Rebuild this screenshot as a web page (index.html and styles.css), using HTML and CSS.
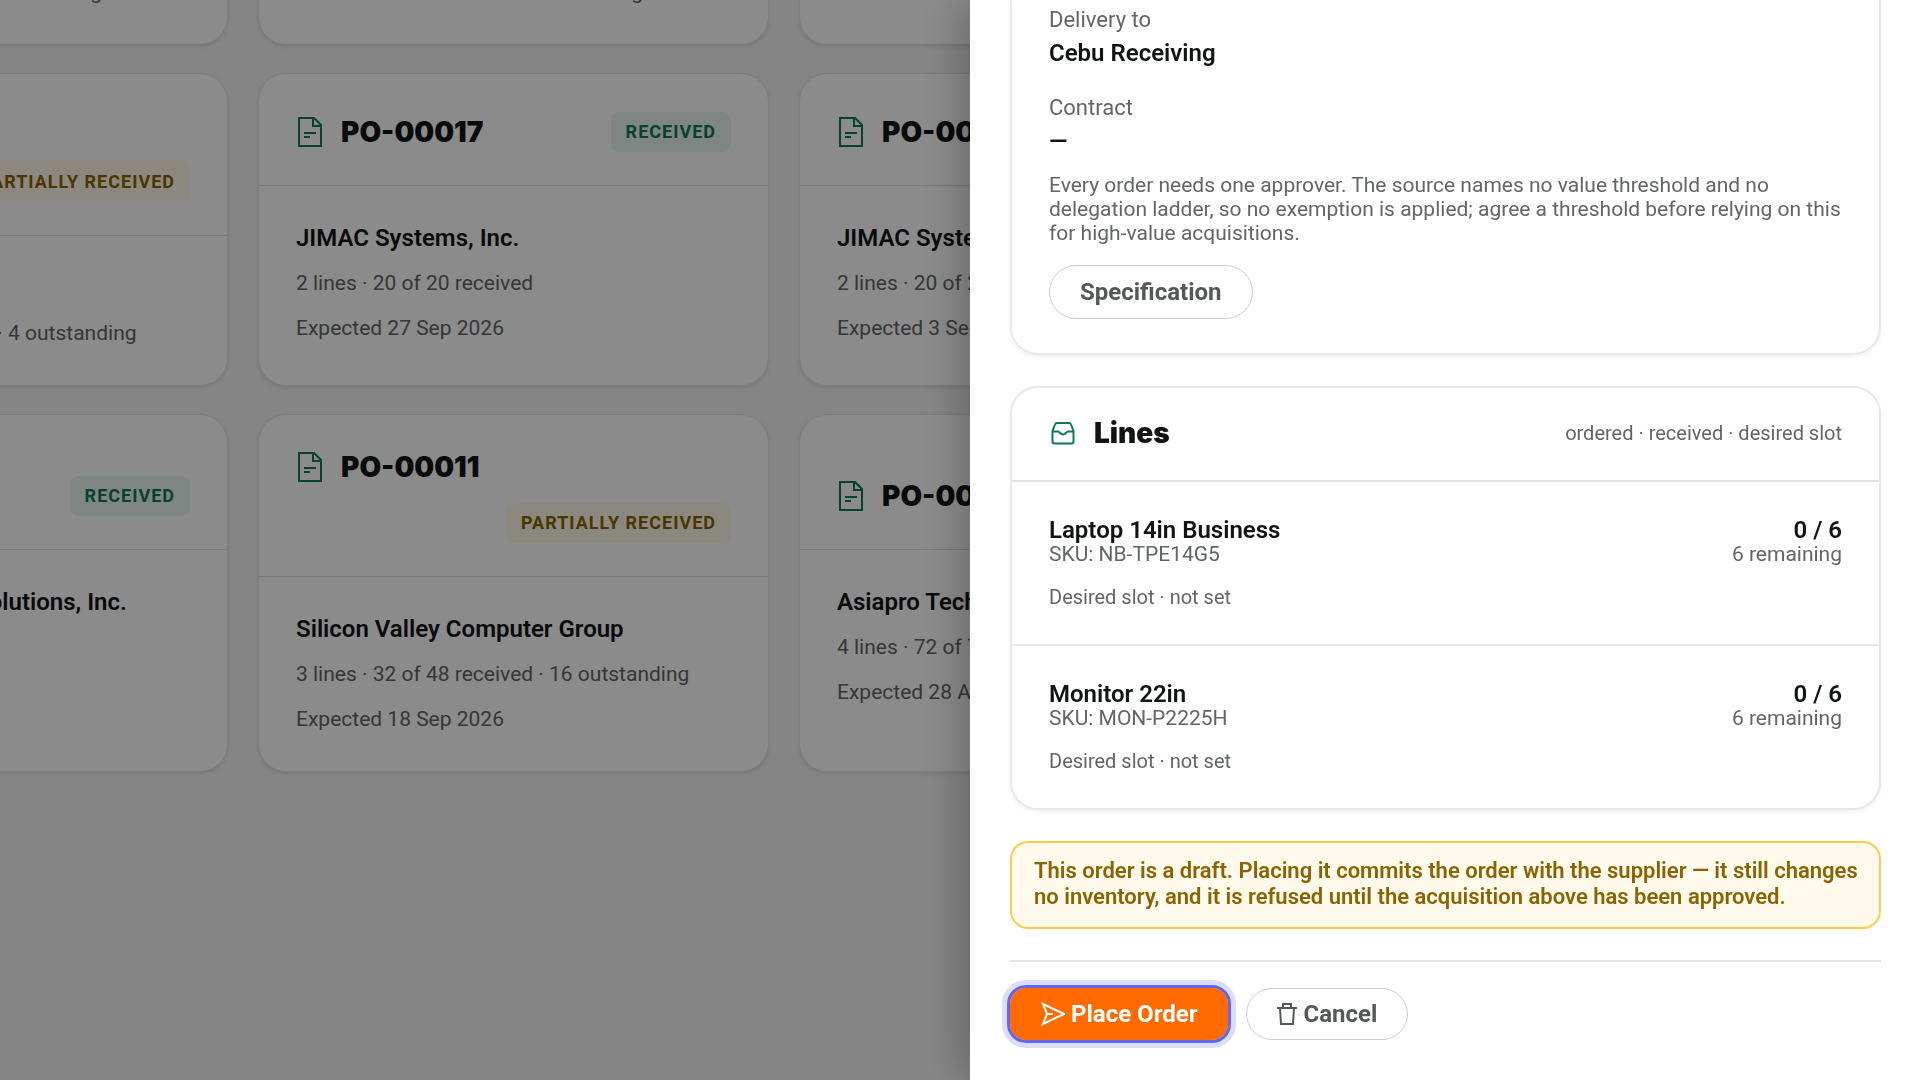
FILE: index.html
```html
<!DOCTYPE html>
<html lang="en">
<head>
<meta charset="utf-8">
<title>Purchase orders</title>
<link rel="stylesheet" href="styles.css">
</head>
<body>
<svg class="sprite" aria-hidden="true">
  <symbol id="icon-file" viewBox="-1 0 28 32"><path d="M2 2h15l7 7v21H2zM16 2v8h8M7 17h12M7 21h6"/></symbol>
</svg>

<main class="board">
  <article class="card">
    <header class="card-head"><div class="card-title"><svg class="icon-file"><use href="#icon-file"/></svg><h2>PO-00021</h2></div><span class="badge badge-partial">Partially received</span></header>
    <div class="card-body"><h3>JIMAC Systems, Inc.</h3><p>1 line · 0 of 1 received · 1 outstanding</p></div>
  </article>
  <article class="card">
    <header class="card-head"><div class="card-title"><svg class="icon-file"><use href="#icon-file"/></svg><h2>PO-00020</h2></div><span class="badge badge-partial">Partially received</span></header>
    <div class="card-body"><h3>JIMAC Systems, Inc.</h3><p>1 line · 0 of 1 received · 1 outstanding</p></div>
  </article>
  <article class="card">
    <header class="card-head"><div class="card-title"><svg class="icon-file"><use href="#icon-file"/></svg><h2>PO-00019</h2></div><span class="badge badge-partial">Partially received</span></header>
    <div class="card-body"><h3>JIMAC Systems, Inc.</h3><p>1 line · 0 of 1 received · 1 outstanding</p></div>
  </article>

  <article class="card">
    <header class="card-head"><div class="card-title"><svg class="icon-file"><use href="#icon-file"/></svg><h2>PO-00018</h2></div><span class="badge badge-partial">Partially received</span></header>
    <div class="card-body"><h3>JIMAC Systems, Inc.</h3><p>3 lines · 20 of 24 received · 4 outstanding</p></div>
  </article>
  <article class="card">
    <header class="card-head"><div class="card-title"><svg class="icon-file"><use href="#icon-file"/></svg><h2>PO-00017</h2></div><span class="badge badge-received">Received</span></header>
    <div class="card-body"><h3>JIMAC Systems, Inc.</h3><p>2 lines · 20 of 20 received</p><p>Expected 27 Sep 2026</p></div>
  </article>
  <article class="card">
    <header class="card-head"><div class="card-title"><svg class="icon-file"><use href="#icon-file"/></svg><h2>PO-00016</h2></div><span class="badge badge-received">Received</span></header>
    <div class="card-body"><h3>JIMAC Systems, Inc.</h3><p>2 lines · 20 of 20 received</p><p>Expected 3 Sep 2026</p></div>
  </article>

  <article class="card">
    <header class="card-head"><div class="card-title"><svg class="icon-file"><use href="#icon-file"/></svg><h2>PO-00012</h2></div><span class="badge badge-received">Received</span></header>
    <div class="card-body"><h3>Asiapro Technology Solutions, Inc.</h3><p>4 lines · 72 of 72</p><p>Expected 2026</p></div>
  </article>
  <article class="card">
    <header class="card-head"><div class="card-title"><svg class="icon-file"><use href="#icon-file"/></svg><h2>PO-00011</h2></div><span class="badge badge-partial">Partially received</span></header>
    <div class="card-body"><h3>Silicon Valley Computer Group</h3><p>3 lines · 32 of 48 received · 16 outstanding</p><p>Expected 18 Sep 2026</p></div>
  </article>
  <article class="card">
    <header class="card-head"><div class="card-title"><svg class="icon-file"><use href="#icon-file"/></svg><h2>PO-00010</h2></div><span class="badge badge-received">Received</span></header>
    <div class="card-body"><h3>Asiapro Technology</h3><p>4 lines · 72 of 72 received</p><p>Expected 28 Aug 2026</p></div>
  </article>
</main>

<div class="backdrop"></div>

<aside class="drawer" aria-label="Purchase order">
  <section class="panel panel-summary">
    <dl class="facts">
      <div><dt>Delivery to</dt><dd>Cebu Receiving</dd></div>
      <div><dt>Contract</dt><dd>—</dd></div>
    </dl>
    <p class="note">Every order needs one approver. The source names no value threshold and no delegation ladder, so no exemption is applied; agree a threshold before relying on this for high-value acquisitions.</p>
    <button type="button" class="btn btn-plain btn-spec">Specification</button>
  </section>

  <section class="panel">
    <header class="panel-head">
      <svg class="icon-tray" viewBox="-2 0 26 24"><path d="M6 2h12q1.500 0 2 1.500L22.500 10v10.500a2 2 0 0 1-2 2h-17a2 2 0 0 1-2-2V10L4 3.500Q4.500 2 6 2zM1.500 10.500H7c1.500 0 2.500 3 5 3s3.500-3 5-3h5.500"/></svg>
      <h2>Lines</h2>
      <span class="hint">ordered · received · desired slot</span>
    </header>
    <ul class="lines">
      <li class="line">
        <div><strong>Laptop 14in Business</strong><span>SKU: NB-TPE14G5</span><p>Desired slot · not set</p></div>
        <div class="qty"><strong>0 / 6</strong><span>6 remaining</span></div>
      </li>
      <li class="line">
        <div><strong>Monitor 22in</strong><span>SKU: MON-P2225H</span><p>Desired slot · not set</p></div>
        <div class="qty"><strong>0 / 6</strong><span>6 remaining</span></div>
      </li>
    </ul>
  </section>

  <p class="alert">This order is a draft. Placing it commits the order with the supplier — it still changes no inventory, and it is refused until the acquisition above has been approved.</p>

  <footer class="actions">
    <button type="button" class="btn btn-primary"><svg class="icon-send" viewBox="0 0 24 24"><path d="M2 2l21 10L2 22l4-10zM6 12h6"/></svg>Place Order</button>
    <button type="button" class="btn btn-plain"><svg class="icon-trash" viewBox="0 0 20 24"><path d="M0 6h20M6 6V2h8v4M3 6l1 16h12l1-16"/></svg>Cancel</button>
  </footer>
</aside>
</body>
</html>
```

FILE: styles.css
```css
* { box-sizing: border-box; }

body {
  margin: 0;
  min-height: 100vh;
  overflow: hidden;
  background: #f5f5f5;
  color: #111414;
  font-family: Roboto, "Liberation Sans", sans-serif;
  font-size: 24px;
  line-height: 28px;
}

h2, h3, p, dl, dd, ul { margin: 0; padding: 0; }

.sprite { display: none; }

svg { fill: none; stroke: currentColor; stroke-width: 2; flex: none; }

/* order board, scrolled down and sideways behind the drawer */
.board {
  display: grid;
  grid-template-columns: repeat(3, minmax(0, 1fr));
  gap: 28px 30px;
  margin: -268px 610px 0 -283px;
}

/* header and body share any spare height of the row */
.card {
  display: grid;
  background: #fff;
  border: 1px solid #e4e4e4;
  border-radius: 28px;
  box-shadow: 0 2px 4px rgba(0, 0, 0, .1);
}

.card-head {
  display: flex;
  flex-wrap: wrap;
  align-items: center;
  align-content: flex-end;
  gap: 17px 32px;
  padding: 33px 37px;
  border-bottom: 1px solid #dcdcdc;
}

.card-title { display: flex; align-items: center; gap: 17px; }

h2 {
  font-family: Inter, "Liberation Sans", sans-serif;
  font-size: 28px;
  font-weight: 900;
  line-height: 38px;
}

.icon-file { width: 28px; height: 32px; color: #0b7a55; }

.badge {
  margin-left: auto;
  padding: 8px 15px;
  border-radius: 8px;
  font-size: 18px;
  line-height: 24px;
  font-weight: 700;
  letter-spacing: 1px;
  text-transform: uppercase;
}

.badge-received { background: #e8f4f0; color: #0b7a55; }
.badge-partial { background: #fffae9; color: #8a6400; }

.card-body {
  display: flex;
  flex-direction: column;
  gap: 17px;
  padding: 38px 37px;
}

h3, strong, dd { font-size: 24px; line-height: 28px; font-weight: 600; }

.card-body p { color: #626666; font-size: 21px; line-height: 28px; }

.backdrop { position: fixed; inset: 0; background: rgba(0, 0, 0, .455); }

.drawer {
  position: fixed;
  inset: 0 0 0 auto;
  width: 950px;
  padding: 0 39px 0 40px;
  overflow: hidden;
  display: flex;
  flex-direction: column;
  gap: 31px;
  background: #fff;
  box-shadow: -8px 0 40px rgba(0, 0, 0, .25);
}

.panel {
  border: 2px solid #e8e8e8;
  border-radius: 28px;
  background: #fff;
  box-shadow: 0 2px 4px rgba(0, 0, 0, .06);
}

.panel-summary {
  border-top: 0;
  border-radius: 0 0 28px 28px;
  padding: 6px 37px 34px;
}

.facts { display: grid; gap: 24px; }

dt, .note, .line span, .line p, .hint { color: #626666; font-size: 21px; line-height: 24px; font-weight: 400; }
dt { font-size: 22px; line-height: 28px; }
dd { margin-top: 3px; line-height: 33px; }
.line p, .hint { font-size: 20px; }

.note { margin: 15px 0 20px; }

.btn {
  display: inline-flex;
  align-items: center;
  justify-content: center;
  gap: 6px;
  height: 52px;
  padding: 0 30px;
  font: 700 24px/28px Roboto, "Liberation Sans", sans-serif;
  cursor: pointer;
}

.btn-plain { border: 1px solid #cbcccc; border-radius: 27px; background: #fff; color: #555858; }
.btn-spec { height: 54px; }

/* shown with its keyboard focus ring */
.btn-primary {
  padding: 0 31px;
  border: 0;
  border-radius: 16px;
  background: #ff6b00;
  color: #fff;
  outline: 3px solid #6366f1;
  box-shadow: 0 0 0 8px #dcdcfb;
}

.panel-head {
  display: flex;
  align-items: center;
  gap: 19px;
  height: 94px;
  padding: 0 37px 2px;
  border-bottom: 2px solid #e4e4e4;
}

.icon-tray { width: 26px; height: 24px; color: #0b7a55; }
.hint { margin-left: auto; }

.lines { list-style: none; }
.line { display: flex; justify-content: space-between; padding: 36px 37px 35px; }
.line + .line { border-top: 2px solid #e8e8e8; }
.line strong, .line span { display: block; line-height: 24px; }
.line p { margin-top: 19px; }
.qty { text-align: right; }

.alert {
  padding: 15px 12px 17px 22px;
  border: 2px solid #f5cf4d;
  border-radius: 18px;
  background: #fffaec;
  color: #8a6400;
  font-size: 22px;
  line-height: 26px;
  font-weight: 600;
}

.actions {
  display: flex;
  align-items: center;
  gap: 18px;
  padding-top: 26px;
  border-top: 2px solid #e4e5e8;
}

.icon-send { width: 24px; height: 24px; }
.icon-trash { width: 20px; height: 24px; }
```
